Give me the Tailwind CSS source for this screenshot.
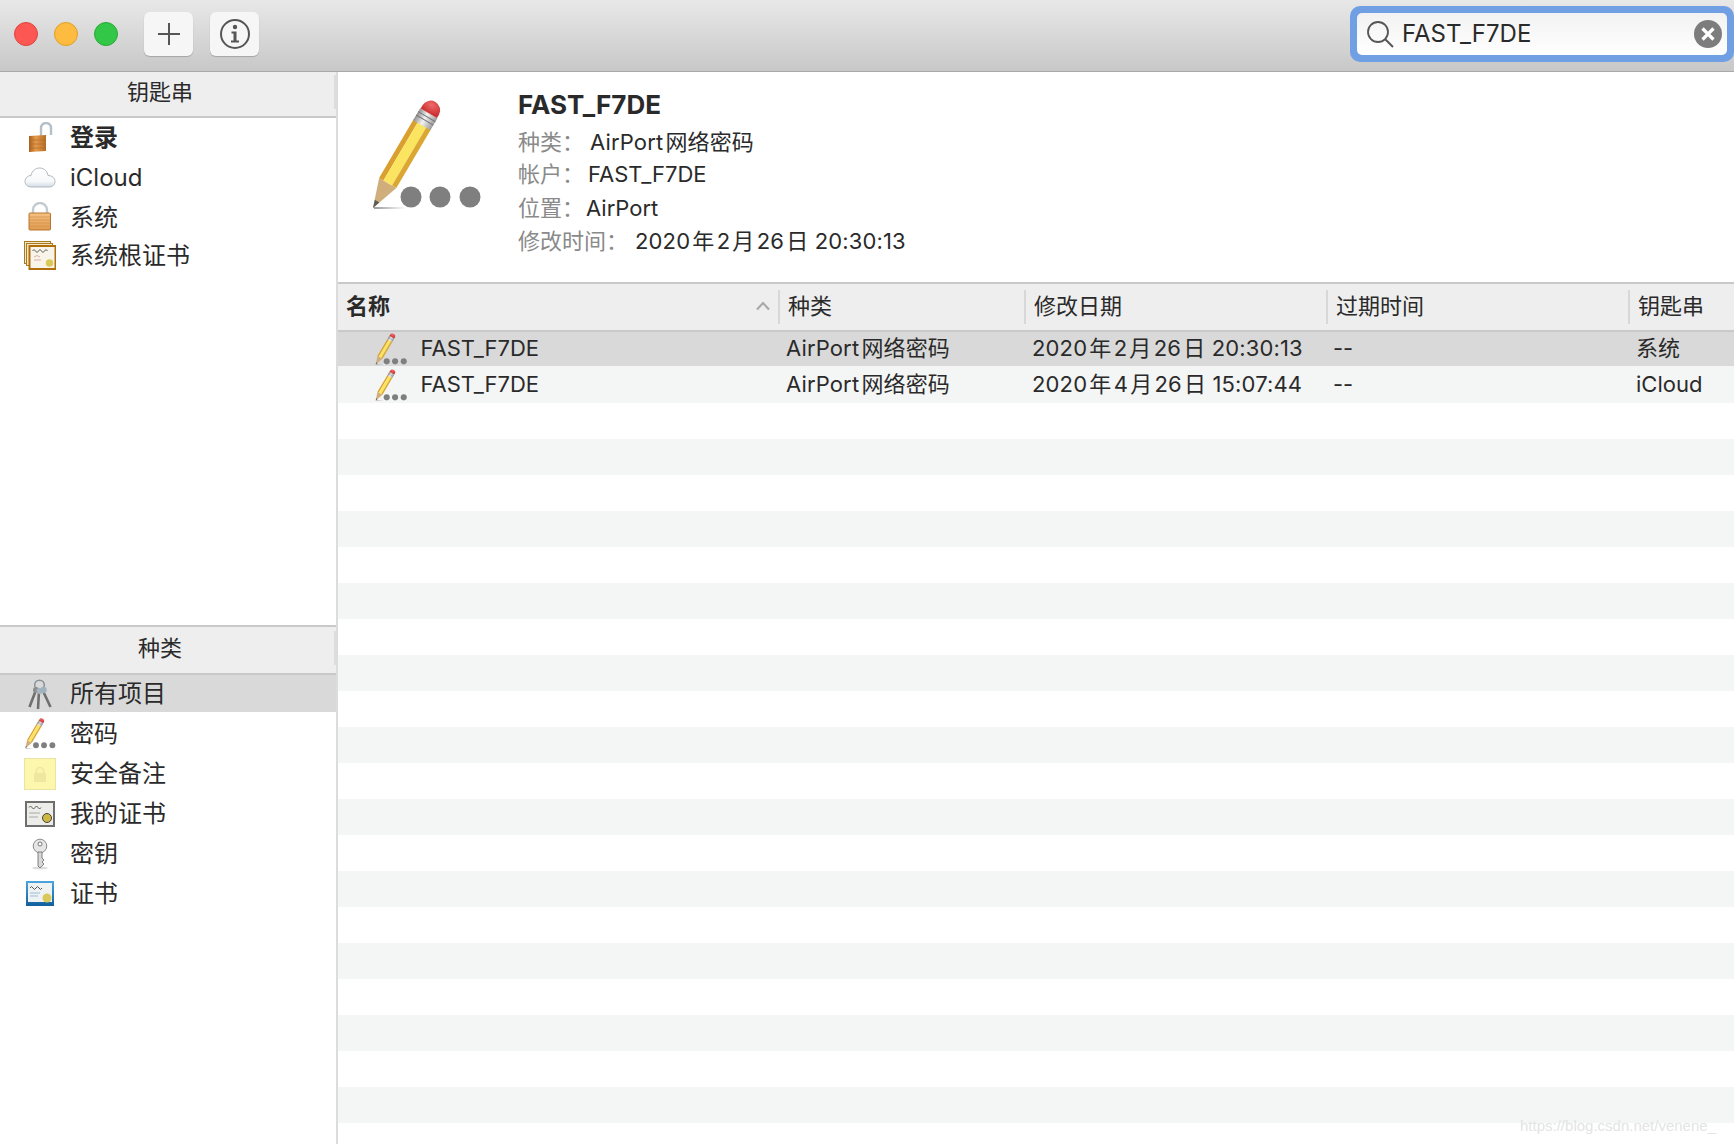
<!DOCTYPE html>
<html lang="zh-CN">
<head>
    <meta charset="UTF-8" />
    <meta name="viewport" content="width=device-width, initial-scale=1.0" />
    <title>钥匙串访问</title>
    <script src="https://cdn.jsdelivr.net/npm/@tailwindcss/browser@4"></script>
</head>
<body class="w-[1734px] h-[1144px] overflow-hidden relative bg-white text-[#2a2a2a] font-['Inter','Noto_Sans_CJK_SC',sans-serif]">

    <!-- shared gradients and the pencil icon -->
    <svg class="absolute w-0 h-0" aria-hidden="true">
        <defs>
            <linearGradient id="metal" x1="0" x2="1" y1="0" y2="0">
                <stop offset="0" stop-color="#8d8d8d" /><stop offset=".45" stop-color="#f2f2f2" /><stop offset="1" stop-color="#9a9a9a" />
            </linearGradient>
            <linearGradient id="brass" x1="0" x2="1" y1="0" y2="0">
                <stop offset="0" stop-color="#a8601c" /><stop offset=".4" stop-color="#e49a4a" /><stop offset="1" stop-color="#b66d25" />
            </linearGradient>
            <linearGradient id="brassLight" x1="0" x2="0" y1="0" y2="1">
                <stop offset="0" stop-color="#f6c283" /><stop offset="1" stop-color="#e19a4f" />
            </linearGradient>
            <linearGradient id="cloud" x1="0" x2="0" y1="0" y2="1">
                <stop offset="0" stop-color="#ffffff" /><stop offset=".7" stop-color="#f6f8fa" /><stop offset="1" stop-color="#d3dce6" />
            </linearGradient>
            <linearGradient id="blue" x1="0" x2="0" y1="0" y2="1">
                <stop offset="0" stop-color="#49a6dc" /><stop offset="1" stop-color="#12609f" />
            </linearGradient>
            <linearGradient id="ground" x1="0" x2="1" y1="0" y2="0">
                <stop offset="0" stop-color="#9b9b9b" /><stop offset="1" stop-color="#ffffff" />
            </linearGradient>
            <radialGradient id="eraser" cx=".4" cy=".35" r=".7">
                <stop offset="0" stop-color="#f06a6a" /><stop offset="1" stop-color="#c92f2f" />
            </radialGradient>
            <symbol id="pencil" viewBox="0 0 150 135">
                <rect x="24" y="122" width="32" height="2" fill="url(#ground)" />
                <g transform="translate(23 123) rotate(30.5)">
                    <path d="M0 0 L-10 -29 H10 Z" fill="#cfae7b" />
                    <path d="M0 0 L-2.6 -8 H2.6 Z" fill="#5c5c5c" />
                    <rect x="-10" y="-97" width="5" height="68" fill="#d99f2f" />
                    <rect x="-5" y="-97" width="10" height="68" fill="#fbe45f" />
                    <rect x="5" y="-97" width="5" height="68" fill="#dba732" />
                    <rect x="-10" y="-110" width="20" height="14" fill="url(#metal)" />
                    <path d="M-10 -106 H10 M-10 -102 H10" stroke="#777" stroke-width="1" />
                    <path d="M-9.5 -110 V-114 a9.5 9 0 0 1 19 0 V-110 Z" fill="url(#eraser)" />
                </g>
                <circle cx="61" cy="112" r="10.5" fill="#7f7f7f" />
                <circle cx="90" cy="112" r="10.5" fill="#7f7f7f" />
                <circle cx="120" cy="112" r="10.5" fill="#7f7f7f" />
            </symbol>
        </defs>
    </svg>

    <!-- Toolbar -->
    <header class="h-[72px] pb-[3px] flex items-center border-b border-[#a9a9a9] bg-gradient-to-b from-[#e8e8e8] to-[#c8c8c8]">
        <div class="flex gap-4 ml-[14px]">
            <span class="size-6 rounded-full bg-[#fc5753] border border-[#e0443e]"></span>
            <span class="size-6 rounded-full bg-[#fdbc40] border border-[#dfa023]"></span>
            <span class="size-6 rounded-full bg-[#33c748] border border-[#27aa35]"></span>
        </div>
        <button class="ml-[26px] w-[49px] h-[44px] rounded-[6px] bg-[#f6f6f6] shadow-[0_1px_1px_#a5a5a5] flex items-center justify-center">
            <svg width="24" height="24" viewBox="0 0 24 24"><path d="M12 1 V23 M1 12 H23" stroke="#555" stroke-width="2" /></svg>
        </button>
        <button class="ml-[17px] w-[49px] h-[44px] rounded-[6px] bg-[#f6f6f6] shadow-[0_1px_1px_#a5a5a5] flex items-center justify-center">
            <svg width="32" height="32" viewBox="0 0 32 32">
                <circle cx="16" cy="16" r="14" fill="none" stroke="#555" stroke-width="2" />
                <circle cx="16" cy="9" r="2.2" fill="#555" />
                <path d="M12.5 13.5 H17.5 V22.5 H20 V24.5 H12 V22.5 H14.5 V15.5 H12.5 Z" fill="#555" />
            </svg>
        </button>
        <div class="ml-auto w-[384px] h-[56px] rounded-[10px] bg-[#70a0e3] p-[7px]">
            <div class="h-full rounded-[5px] bg-gradient-to-b from-[#f2f2f2] to-white flex items-center pl-[9px] pr-[5px]">
                <svg width="28" height="28" viewBox="0 0 28 28" class="shrink-0">
                    <circle cx="12" cy="12" r="10" fill="none" stroke="#555" stroke-width="1.8" />
                    <path d="M19 19 L27 27" stroke="#555" stroke-width="2" />
                </svg>
                <span class="ml-[8px] text-[24px] leading-none">FAST_F7DE</span>
                <svg width="28" height="28" viewBox="0 0 28 28" class="ml-auto">
                    <circle cx="14" cy="14" r="14" fill="#7d7d7d" />
                    <path d="M8.5 8.5 L19.5 19.5 M19.5 8.5 L8.5 19.5" stroke="#fff" stroke-width="3.2" />
                </svg>
            </div>
        </div>
    </header>

    <div class="flex h-[1072px]">
        <!-- Sidebar -->
        <aside class="w-[338px] shrink-0 border-r-2 border-[#dcdcdc] text-[24px]">
            <section class="h-[553px]">
                <div class="h-[46px] pb-[4px] bg-[#eeeeee] border-b-2 border-[#c9c9c9] flex items-center text-[22px]">
                    <span class="w-[320px] text-center">钥匙串</span>
                    <span class="ml-auto w-[2px] h-[34px] bg-[#dddddd]"></span>
                </div>
                <div class="h-10 flex items-center pl-6 gap-[14px] font-bold">
                    <svg class="size-8 shrink-0" viewBox="0 0 32 32">
                        <path d="M17 15 V6 a5 5 0 0 1 10 0 V13" fill="none" stroke="#b4c0c9" stroke-width="2.4" />
                        <path d="M5 14 L22 13 V29 L5 30 Z" fill="url(#brass)" />
                        <path d="M5 18 H22 M5 22 H22 M5 26 H22" stroke="#a96a2b" stroke-width=".6" />
                    </svg>
                    <span>登录</span>
                </div>
                <div class="h-10 flex items-center pl-6 gap-[14px]">
                    <svg class="size-8 shrink-0" viewBox="0 0 32 32">
                        <path d="M7.5 25 C3.5 25 1 22.5 1 19.5 C1 16 4 13.5 7 13.5 C8 8.5 12 6 15.5 6 C20.5 6 23.5 9.5 24 13.5 C28 13.5 31 16 31 19.5 C31 23 28 25 25 25 Z" fill="url(#cloud)" stroke="#a9b0b9" stroke-width=".9" />
                    </svg>
                    <span>iCloud</span>
                </div>
                <div class="h-[39px] flex items-center pl-6 gap-[14px]">
                    <svg class="size-8 shrink-0" viewBox="0 0 32 32">
                        <path d="M9 12 V8 a7 7 0 0 1 14 0 V12" fill="none" stroke="#c3cbd1" stroke-width="2.4" />
                        <rect x="5" y="11" width="21.5" height="17" rx="1" fill="url(#brassLight)" stroke="#b5742f" />
                        <path d="M5 15 H26.5 M5 18 H26.5 M5 21 H26.5 M5 24 H26.5" stroke="#c98a45" stroke-width=".6" />
                    </svg>
                    <span>系统</span>
                </div>
                <div class="h-[38px] flex items-center pl-6 gap-[14px]">
                    <svg class="size-8 shrink-0" viewBox="0 0 32 32">
                        <rect x=".5" y="1.5" width="26" height="22" fill="#f2e5c8" stroke="#a97b1f" />
                        <rect x="2.5" y="3.5" width="26" height="22" fill="#f2e5c8" stroke="#a97b1f" />
                        <rect x="5.5" y="6" width="26" height="23" fill="#f9f4ea" stroke="#b06f0c" stroke-width="2" />
                        <path d="M8.5 11 q1.5 -3 3 0 t3 0 t3 0 t3 0 t3 0" fill="none" stroke="#555" stroke-width="1" />
                        <path d="M10 17 q3 -3 6 0 M10 20 H17" stroke="#e0a9a9" fill="none" />
                        <circle cx="25.5" cy="23" r="3.8" fill="#d9ca58" />
                    </svg>
                    <span>系统根证书</span>
                </div>
            </section>

            <section class="border-t-2 border-[#c9c9c9]">
                <div class="h-[48px] pb-[4px] bg-[#eeeeee] border-b-2 border-[#c9c9c9] flex items-center text-[22px]">
                    <span class="w-[320px] text-center">种类</span>
                    <span class="ml-auto w-[2px] h-[34px] bg-[#dddddd]"></span>
                </div>
                <div class="h-[37px] mb-[2px] bg-[#d9d9d9] flex items-center pl-6 gap-[14px]">
                    <svg class="size-8 shrink-0" viewBox="0 0 32 32" fill="none">
                        <circle cx="15.5" cy="7" r="4.8" stroke="#8a8f94" stroke-width="1.5" />
                        <path d="M12 12 L5.5 29 M15 13 L14 31 M19 13 L26.5 29" stroke="#6f6f6f" stroke-width="2.6" />
                        <circle cx="12" cy="12" r="3" fill="#8d8d8d" />
                        <circle cx="15.5" cy="13" r="3" fill="#a9b4bc" />
                        <circle cx="19.5" cy="12" r="3.2" fill="#9fb2c0" />
                    </svg>
                    <span>所有项目</span>
                </div>
                <div class="h-10 flex items-center pl-6 gap-[14px]">
                    <svg class="size-8 shrink-0" viewBox="18 14 115 115"><use href="#pencil" width="150" height="135" /></svg>
                    <span>密码</span>
                </div>
                <div class="h-10 flex items-center pl-6 gap-[14px]">
                    <div class="size-8 shrink-0 bg-[#fdf7ad] border border-[#e9e3a4] flex items-center justify-center">
                        <svg class="size-[16px]" viewBox="0 0 16 16">
                            <path d="M4.5 7 V5 a3.5 3.5 0 0 1 7 0 V7" fill="none" stroke="#eee79f" stroke-width="1.6" />
                            <rect x="2" y="7" width="12" height="9" fill="#eee79f" />
                        </svg>
                    </div>
                    <span>安全备注</span>
                </div>
                <div class="h-10 flex items-center pl-6 gap-[14px]">
                    <svg class="size-8 shrink-0" viewBox="0 0 32 32">
                        <rect x="2" y="4" width="28" height="24" fill="#ecece8" stroke="#6e6e6e" stroke-width="2" />
                        <path d="M5 9.5 q1.5 -3 3 0 t3 0 t3 0 t3 0" fill="none" stroke="#555" stroke-width="1" />
                        <path d="M5 15 H16 M5 19 H14" stroke="#aaa" />
                        <circle cx="23" cy="20" r="4.5" fill="#d0b840" stroke="#444" />
                    </svg>
                    <span>我的证书</span>
                </div>
                <div class="h-10 flex items-center pl-6 gap-[14px]">
                    <svg class="size-8 shrink-0" viewBox="0 0 32 32">
                        <ellipse cx="16" cy="30" rx="8" ry="1.5" fill="#dcdcdc" />
                        <circle cx="16" cy="8" r="6.8" fill="#e6e6e6" stroke="#8c8c8c" />
                        <circle cx="16" cy="6" r="2" fill="#fff" stroke="#777" />
                        <path d="M14 14 H18 V20 L20 22 L18 24 L20 26 L16 30 L14 28 Z" fill="#d8d8d8" stroke="#666" stroke-width=".8" />
                    </svg>
                    <span>密钥</span>
                </div>
                <div class="h-10 flex items-center pl-6 gap-[14px]">
                    <svg class="size-8 shrink-0" viewBox="0 0 32 32">
                        <rect x="2" y="3" width="28" height="25" fill="url(#blue)" />
                        <rect x="4" y="5" width="24" height="19" fill="#eef2f2" />
                        <path d="M6 10 q1.5 -3 3 0 t3 0 t3 0 t3 0" fill="none" stroke="#555" stroke-width="1" />
                        <path d="M6 15 H16 M6 18 H14" stroke="#9dbcdc" />
                        <circle cx="23" cy="20" r="4.5" fill="#d9c95a" />
                    </svg>
                    <span>证书</span>
                </div>
            </section>
        </aside>

        <!-- Main -->
        <main class="flex-1 flex flex-col min-w-0">
            <section class="h-[210px] flex pl-[12px] pt-[13px]">
                <svg class="shrink-0" width="150" height="135"><use href="#pencil" /></svg>
                <div class="ml-[18px] pt-[4px]">
                    <h1 class="text-[26px] leading-[32px] font-bold mb-[5px]">FAST_F7DE</h1>
                    <div class="text-[22px] leading-[33px]">
                        <p><span class="text-[#8a8a8a]">种类：</span><span class="ml-[6px] tracking-[0.15px]">AirPort&#8202;网络密码</span></p>
                        <p class="-mt-px"><span class="text-[#8a8a8a]">帐户：</span><span class="ml-[4px]">FAST_F7DE</span></p>
                        <p class="mt-px"><span class="text-[#8a8a8a]">位置：</span><span class="ml-[2px]">AirPort</span></p>
                        <p><span class="text-[#8a8a8a]">修改时间：</span><span class="ml-[7px] tracking-[0.15px]">2020&#8202;年&#8202;2&#8202;月&#8202;26&#8202;日 20:30:13</span></p>
                    </div>
                </div>
            </section>

            <!-- Column headers -->
            <div class="h-[50px] bg-[#eeeeee] border-y-2 border-[#c9c9c9] grid grid-cols-[442px_246px_302px_302px_1fr] items-center text-[22px]">
                <div class="h-[34px] pb-[2px] flex items-center pl-2 pr-[7px] border-r-2 border-[#d8d8d8] font-semibold">
                    <span>名称</span>
                    <svg class="ml-auto" width="16" height="10" viewBox="0 0 16 10"><path d="M2 8.5 L8 2 L14 8.5" fill="none" stroke="#a9a9a9" stroke-width="2.2" /></svg>
                </div>
                <div class="h-[34px] pb-[2px] flex items-center pl-2 border-r-2 border-[#d8d8d8]">种类</div>
                <div class="h-[34px] pb-[2px] flex items-center pl-2 border-r-2 border-[#d8d8d8]">修改日期</div>
                <div class="h-[34px] pb-[2px] flex items-center pl-2 border-r-2 border-[#d8d8d8]">过期时间</div>
                <div class="h-[34px] pb-[2px] flex items-center pl-2">钥匙串</div>
            </div>

            <!-- Rows -->
            <div class="h-[34px] pb-[2px] bg-[#d9d9d9] grid grid-cols-[442px_245px_302px_302px_1fr] items-center text-[22px]">
                <div class="flex items-center h-[32px] pl-[31px]">
                    <svg class="w-[43.5px] h-[39px] shrink-0" viewBox="0 0 150 135"><use href="#pencil" /></svg>
                    <span class="ml-[8px]">FAST_F7DE</span>
                </div>
                <div class="pl-[6px] tracking-[0.15px]">AirPort&#8202;网络密码</div>
                <div class="pl-[7px] tracking-[0.15px]">2020&#8202;年&#8202;2&#8202;月&#8202;26&#8202;日 20:30:13</div>
                <div class="pl-[6px]">--</div>
                <div class="pl-[7px]">系统</div>
            </div>
            <div class="h-[37px] bg-[#f4f5f5] grid grid-cols-[442px_245px_302px_302px_1fr] items-center text-[22px]">
                <div class="flex items-center h-[37px] pl-[31px]">
                    <svg class="w-[43.5px] h-[39px] shrink-0" viewBox="0 0 150 135"><use href="#pencil" /></svg>
                    <span class="ml-[8px]">FAST_F7DE</span>
                </div>
                <div class="pl-[6px] tracking-[0.15px]">AirPort&#8202;网络密码</div>
                <div class="pl-[7px] tracking-[0.15px]">2020&#8202;年&#8202;4&#8202;月&#8202;26&#8202;日 15:07:44</div>
                <div class="pl-[6px]">--</div>
                <div class="pl-[7px]">iCloud</div>
            </div>

            <!-- Empty striped rows -->
            <div class="flex-1 bg-[repeating-linear-gradient(to_bottom,#ffffff_0,#ffffff_36px,#f4f5f5_36px,#f4f5f5_72px)]"></div>
        </main>
    </div>

    <!-- Watermark -->
    <div class="absolute right-[18px] bottom-[7px] text-[15px] leading-[22px] text-[#e3e4e4] font-['Liberation_Sans',sans-serif]">https://blog.csdn.net/venene_</div>
</body>
</html>
